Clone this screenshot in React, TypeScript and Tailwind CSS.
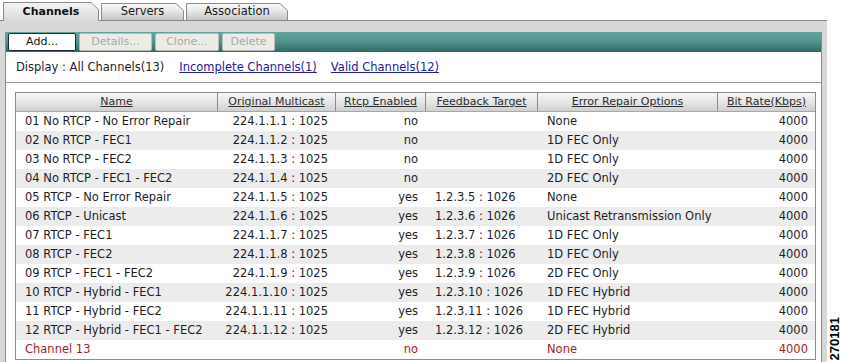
import React from "react";

type Row = {
  name: string;
  mc: string;
  rtcp: string;
  fb: string;
  err: string;
  rate: string;
  red?: boolean;
};

const rows: Row[] = [
  { name: "01 No RTCP - No Error Repair", mc: "224.1.1.1 : 1025", rtcp: "no", fb: "", err: "None", rate: "4000" },
  { name: "02 No RTCP - FEC1", mc: "224.1.1.2 : 1025", rtcp: "no", fb: "", err: "1D FEC Only", rate: "4000" },
  { name: "03 No RTCP - FEC2", mc: "224.1.1.3 : 1025", rtcp: "no", fb: "", err: "1D FEC Only", rate: "4000" },
  { name: "04 No RTCP - FEC1 - FEC2", mc: "224.1.1.4 : 1025", rtcp: "no", fb: "", err: "2D FEC Only", rate: "4000" },
  { name: "05 RTCP - No Error Repair", mc: "224.1.1.5 : 1025", rtcp: "yes", fb: "1.2.3.5 : 1026", err: "None", rate: "4000" },
  { name: "06 RTCP - Unicast", mc: "224.1.1.6 : 1025", rtcp: "yes", fb: "1.2.3.6 : 1026", err: "Unicast Retransmission Only", rate: "4000" },
  { name: "07 RTCP - FEC1", mc: "224.1.1.7 : 1025", rtcp: "yes", fb: "1.2.3.7 : 1026", err: "1D FEC Only", rate: "4000" },
  { name: "08 RTCP - FEC2", mc: "224.1.1.8 : 1025", rtcp: "yes", fb: "1.2.3.8 : 1026", err: "1D FEC Only", rate: "4000" },
  { name: "09 RTCP - FEC1 - FEC2", mc: "224.1.1.9 : 1025", rtcp: "yes", fb: "1.2.3.9 : 1026", err: "2D FEC Only", rate: "4000" },
  { name: "10 RTCP - Hybrid - FEC1", mc: "224.1.1.10 : 1025", rtcp: "yes", fb: "1.2.3.10 : 1026", err: "1D FEC Hybrid", rate: "4000" },
  { name: "11 RTCP - Hybrid - FEC2", mc: "224.1.1.11 : 1025", rtcp: "yes", fb: "1.2.3.11 : 1026", err: "1D FEC Hybrid", rate: "4000" },
  { name: "12 RTCP - Hybrid - FEC1 - FEC2", mc: "224.1.1.12 : 1025", rtcp: "yes", fb: "1.2.3.12 : 1026", err: "2D FEC Hybrid", rate: "4000" },
  { name: "Channel 13", mc: "", rtcp: "no", fb: "", err: "None", rate: "4000", red: true },
];

function Tab({
  w,
  h,
  active,
  id,
  children,
}: {
  w: number;
  h: number;
  active?: boolean;
  id: string;
  children: React.ReactNode;
}) {
  const d = `M0.5 ${h} V0.5 H${w - 8} L${w - 0.5} 7.5 V${h}`;
  return (
    <div
      className={
        active
          ? "relative z-10 -mb-px flex items-center justify-center"
          : "relative flex items-center justify-center"
      }
      style={{ width: w, height: h }}
    >
      <svg className="absolute inset-0" width={w} height={h}>
        <defs>
          <linearGradient id={id} x1="0" y1="0" x2="0" y2="1">
            {active ? (
              <>
                <stop offset="0" stopColor="#f6f6f6" />
                <stop offset="1" stopColor="#d8d8d8" />
              </>
            ) : (
              <>
                <stop offset="0" stopColor="#fbfbfb" />
                <stop offset="0.5" stopColor="#e4e4e4" />
                <stop offset="1" stopColor="#c6c6c6" />
              </>
            )}
          </linearGradient>
        </defs>
        <path d={`${d} Z`} fill={`url(#${id})`} stroke="none" />
        <path d={d} fill="none" stroke="#8c8c8c" strokeWidth="1" />
      </svg>
      <span
        className={
          active
            ? "relative pt-[1px] text-[11px] font-bold text-[#111]"
            : "relative pt-[1px] text-[11.5px] text-[#1a1a1a]"
        }
      >
        {children}
      </span>
    </div>
  );
}

function Btn({ w, enabled, children }: { w: number; enabled?: boolean; children: React.ReactNode }) {
  return (
    <div
      className={
        enabled
          ? "flex h-[18px] items-center justify-center rounded-[2px] border border-[#1d2b3a] bg-white text-[11px] text-[#111]"
          : "flex h-[18px] items-center justify-center rounded-[2px] border border-[#b9bdb6] bg-[#ecece6] text-[11px] text-[#a9a9a9]"
      }
      style={{ width: w }}
    >
      {children}
    </div>
  );
}

export default function App() {
  const cols = "grid grid-cols-[202px_118px_90px_112px_180px_97px]";
  return (
    <div className="flex h-[362px] w-[843px] overflow-hidden bg-white font-['DejaVu_Sans',sans-serif] text-[#1e1e1e]">
      <div className="flex w-[827px] flex-col">
        {/* Tabs */}
        <div className="relative z-10 flex h-[20px] items-end gap-[2px] pl-[3px]">
          <Tab w={96} h={19} active id="t1">
            Channels
          </Tab>
          <Tab w={83} h={17} id="t2">
            Servers
          </Tab>
          <Tab w={102} h={17} id="t3">
            Association
          </Tab>
        </div>

        {/* Panel */}
        <div className="flex flex-1 flex-col border-t border-[#8a8a8a] bg-[#d8d8d8] px-[5px] pt-[11px]">
          <div className="flex flex-1 flex-col border-x border-[#8a8a8a] bg-white">
            {/* Toolbar */}
            <div className="flex h-[20px] items-center gap-[3px] bg-[linear-gradient(to_bottom,#64a39d,#55958f_45%,#3f7d78_75%,#2f6964)] pl-[2px]">
              <Btn w={68} enabled>
                Add...
              </Btn>
              <Btn w={73}>Details...</Btn>
              <Btn w={64}>Clone...</Btn>
              <Btn w={53}>Delete</Btn>
            </div>

            {/* Display row */}
            <div className="flex h-[31px] items-center border-b border-[#9a9a9a] pl-[10px] pt-[2px] text-[11.5px]">
              <span>Display : All Channels(13)</span>
              <span className="ml-[15px] text-[#20209c] underline">Incomplete Channels(1)</span>
              <span className="ml-[14px] text-[#20209c] underline">Valid Channels(12)</span>
            </div>

            {/* Table */}
            <div className="ml-[9px] mt-[9px] w-[801px] border border-[#8c8c8c]">
              <div
                className={`${cols} h-[19px] border-b border-[#a8a8a8] bg-[linear-gradient(to_bottom,#f7f7f7,#e6e6e6_50%,#cfcfcf)] text-[11px] text-[#2e2e2e]`}
              >
                {["Name", "Original Multicast", "Rtcp Enabled", "Feedback Target", "Error Repair Options", "Bit Rate(Kbps)"].map(
                  (h, i) => (
                    <div
                      key={h}
                      className={
                        i < 5
                          ? "flex items-center justify-center border-r border-[#8c8c8c] underline"
                          : "flex items-center justify-center underline"
                      }
                    >
                      {h}
                    </div>
                  )
                )}
              </div>
              {rows.map((r, i) => (
                <div
                  key={r.name}
                  className={`${cols} h-[19px] items-center text-[11.5px] ${i % 2 === 1 ? "bg-[#ececec]" : "bg-white"} ${
                    r.red ? "text-[#a81b29]" : "text-[#1e1e1e]"
                  }`}
                >
                  <div className="pl-[9px] whitespace-nowrap">{r.name}</div>
                  <div className="pr-[8px] text-right whitespace-nowrap">{r.mc}</div>
                  <div className="pr-[8px] text-right">{r.rtcp}</div>
                  <div className="pl-[9px] whitespace-nowrap">{r.fb}</div>
                  <div className="pl-[9px] whitespace-nowrap">{r.err}</div>
                  <div className="pr-[7px] text-right">{r.rate}</div>
                </div>
              ))}
            </div>
          </div>
        </div>
      </div>
      <div className="flex flex-1 flex-col justify-end pb-[2px] pl-[1px]">
        <span className="rotate-180 font-['Liberation_Sans',Arial,sans-serif] text-[13px] font-bold leading-none text-black [writing-mode:vertical-rl]">
          270181
        </span>
      </div>
    </div>
  );
}
